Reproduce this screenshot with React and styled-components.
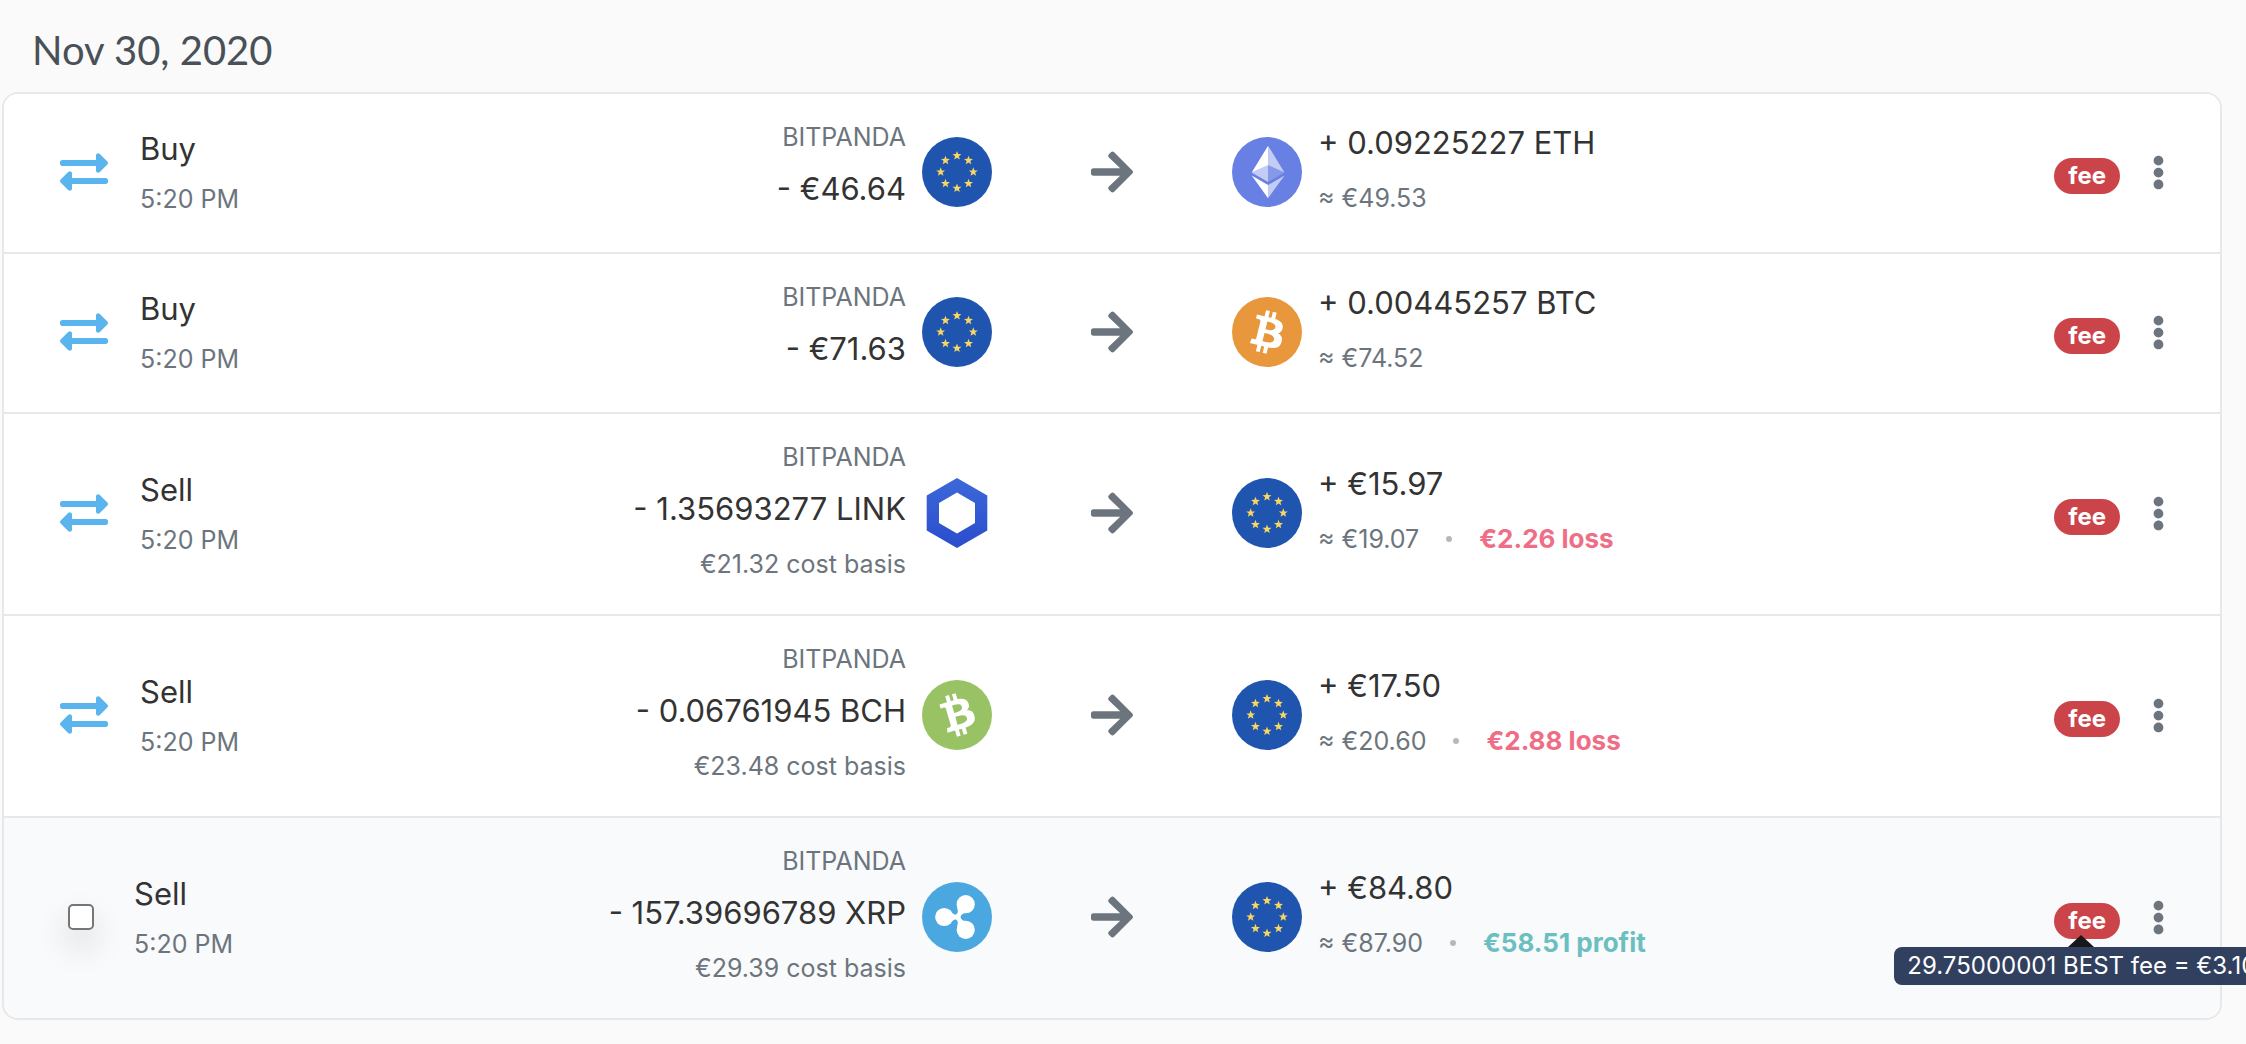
import * as React from 'react';
import styled, { createGlobalStyle } from 'styled-components';
import { FaArrowRight, FaEllipsisV, FaExchangeAlt } from 'react-icons/fa';

const GlobalStyle = createGlobalStyle`
  * {
    box-sizing: border-box;
  }

  body {
    margin: 0;
    overflow-x: hidden;
    background-color: #fafafa;
    color: #333;
    font-family: Inter, 'Liberation Sans', sans-serif;
  }
`;

const StyledMain = styled.main`
  padding: 24px 24px 24px 2px;
  overflow: hidden;
`;

const StyledDate = styled.h2`
  margin: 0 0 16px;
  padding-left: 30px;
  color: #495057;
  font-family: Lato, sans-serif;
  font-size: 40px;
  font-weight: 400;
  line-height: 52px;
`;

const StyledList = styled.ul`
  margin: 0;
  padding: 0;
  list-style: none;
  background-color: white;
  border: 2px solid #e8e8e9;
  border-radius: 16px;
`;

const StyledRow = styled.li`
  display: grid;
  grid-template-columns: 1fr 240px 1fr;
  align-items: center;
  padding: 0 56px;
  background-color: ${props => (props.$active ? '#f9fafc' : 'white')};
  border-bottom: 2px solid #e8e8e9;

  &:first-child {
    border-radius: 14px 14px 0 0;
  }

  &:last-child {
    border-bottom: 0;
    border-radius: 0 0 14px 14px;
  }
`;

const StyledSide = styled.div`
  display: flex;
  align-items: center;
`;

const StyledKind = styled.div`
  display: flex;
  align-items: center;
  gap: ${props => (props.$active ? '40px' : '32px')};
  padding-left: ${props => (props.$active ? '8px' : '0')};
  color: #5ab4ee;

  svg {
    margin-bottom: 2px;
  }
`;

const StyledKindText = styled.div`
  padding-top: 2px;
`;

const StyledCheckbox = styled.input`
  appearance: none;
  width: 26px;
  height: 26px;
  margin: 0 0 2px;
  background-color: white;
  border: 2px solid #767676;
  border-radius: 5px;
  box-shadow: 0 16px 32px rgba(0, 0, 0, 0.15);
`;

const StyledTitle = styled.div`
  color: #333;
  font-size: 31px;
  line-height: 50px;
`;

const StyledTime = styled.div`
  color: #6c757d;
  font-size: 25px;
  line-height: 50px;
`;

const StyledFrom = styled.div`
  flex: 1;
  padding: 23px 16px 31px 0;
  text-align: right;
`;

const StyledTo = styled.div`
  flex: 1;
  padding: 0 0 18px 16px;
`;

const StyledExchange = styled.div`
  color: #6c757d;
  font-size: 25px;
  line-height: 40px;
`;

const StyledAmount = styled.div`
  font-size: 31px;
  line-height: 64px;
`;

const StyledDetail = styled.div`
  display: flex;
  align-items: center;
  justify-content: ${props => (props.$end ? 'flex-end' : 'flex-start')};
  gap: 27px;
  margin-top: 4px;
  color: #6c757d;
  font-size: 25px;
  line-height: 38px;
`;

const StyledDot = styled.span`
  width: 6px;
  height: 6px;
  background-color: #b5b9be;
  border-radius: 50%;
`;

const StyledResult = styled.strong`
  color: ${props => (props.$profit ? '#6bbfc0' : '#ef6e85')};
  font-size: 26px;
  font-weight: 700;
`;

const StyledCoin = styled.svg`
  flex: none;
  width: 70px;
  height: 70px;
  margin-bottom: 2px;
`;

const StyledDirection = styled.div`
  display: flex;
  justify-content: center;
  padding-bottom: 2px;
  color: #6c757d;
`;

const StyledActions = styled.div`
  display: flex;
  align-items: center;
  gap: 32px;
  padding-bottom: 2px;
`;

const StyledFee = styled.span`
  position: relative;
  margin-top: 8px;
  padding: 0 14px;
  background-color: #cb444a;
  border-radius: 18px;
  color: white;
  font-size: 24px;
  font-weight: 700;
  line-height: 36px;
`;

const StyledTooltip = styled.span`
  position: absolute;
  top: 44px;
  left: -160px;
  padding: 0 13px;
  background-color: rgba(42, 56, 88, 0.96);
  border-radius: 8px;
  font-size: 24px;
  font-weight: 400;
  line-height: 38px;
  white-space: nowrap;

  &::before {
    content: '';
    position: absolute;
    top: -12px;
    left: 174px;
    border: 13px solid transparent;
    border-top: 0;
    border-bottom: 12px solid #161819;
  }
`;

const StyledMenuButton = styled.button`
  display: flex;
  justify-content: center;
  width: 12px;
  padding: 0;
  background: none;
  border: 0;
  color: #6c757d;

  svg {
    flex: none;
    width: 13px;
    height: 35px;
  }
`;

const STAR_ANGLES = [0, 45, 90, 135, 180, 225, 270, 315];

function starPoints(angle) {
  const cx = 35 + 16.3 * Math.sin((angle * Math.PI) / 180);
  const cy = 35 - 16.3 * Math.cos((angle * Math.PI) / 180);
  return Array.from({ length: 10 }, (_, i) => {
    const r = i % 2 ? 2 : 4.7;
    const a = (i * Math.PI) / 5;
    return `${cx + r * Math.sin(a)},${cy - r * Math.cos(a)}`;
  }).join(' ');
}

function EurCoin() {
  return (
    <StyledCoin viewBox="0 0 70 70" aria-hidden="true">
      <circle cx="35" cy="35" r="35" fill="#1f55ae" />
      {STAR_ANGLES.map(angle => (
        <polygon key={angle} points={starPoints(angle)} fill="#f8d661" />
      ))}
    </StyledCoin>
  );
}

function EthCoin() {
  return (
    <StyledCoin viewBox="0 0 32 32" aria-hidden="true">
      <circle cx="16" cy="16" r="16" fill="#687fe3" />
      <g fill="white">
        <path fillOpacity=".602" d="M16.498 4v8.87l7.497 3.35z" />
        <path d="M16.498 4L9 16.22l7.498-3.35z" />
        <path fillOpacity=".602" d="M16.498 21.968v6.027L24 17.616z" />
        <path d="M16.498 27.995v-6.028L9 17.616z" />
        <path fillOpacity=".2" d="M16.498 20.573l7.497-4.353-7.497-3.348z" />
        <path fillOpacity=".602" d="M9 16.22l7.498 4.353v-7.701z" />
      </g>
    </StyledCoin>
  );
}

function BtcCoin() {
  return (
    <StyledCoin viewBox="0 0 32 32" aria-hidden="true">
      <circle cx="16" cy="16" r="16" fill="#e8973d" />
      <path
        fill="white"
        d="M23.189 14.02c.314-2.096-1.283-3.223-3.465-3.975l.708-2.84-1.728-.43-.69 2.765c-.454-.114-.92-.22-1.385-.326l.695-2.783L15.596 6l-.708 2.839c-.376-.086-.746-.17-1.104-.26l.002-.009-2.384-.595-.46 1.846s1.283.294 1.256.312c.7.175.826.638.805 1.006l-.806 3.235c.048.012.11.03.18.057l-.183-.045-1.13 4.532c-.086.212-.303.531-.793.41.018.025-1.256-.313-1.256-.313l-.858 1.978 2.25.561c.418.105.828.215 1.231.318l-.715 2.872 1.727.43.708-2.84c.472.127.93.245 1.378.357l-.706 2.828 1.728.43.715-2.866c2.948.558 5.164.333 6.097-2.333.752-2.146-.037-3.385-1.588-4.192 1.13-.26 1.98-1.003 2.207-2.538zm-3.95 5.538c-.533 2.147-4.148.986-5.32.695l.95-3.805c1.172.293 4.929.872 4.37 3.11zm.535-5.569c-.487 1.953-3.495.96-4.47.717l.86-3.45c.975.243 4.118.696 3.61 2.733z"
      />
    </StyledCoin>
  );
}

function BchCoin() {
  return (
    <StyledCoin viewBox="0 0 32 32" aria-hidden="true">
      <circle cx="16" cy="16" r="16" fill="#98c263" />
      <path
        fill="white"
        d="M21.207 10.534c-.776-1.972-2.722-2.15-4.988-1.71l-.807-2.813-1.712.491.786 2.74c-.45.128-.908.27-1.363.41l-.79-2.758-1.711.49.805 2.813c-.368.114-.73.226-1.085.328l-.003-.01-2.362.677.525 1.83s1.258-.388 1.243-.358c.694-.199 1.035.139 1.2.468l.92 3.204c.047-.013.11-.029.184-.04l-.181.052 1.287 4.49c.032.227.004.612-.48.752.027.013-1.246.356-1.246.356l.247 2.143 2.228-.64c.415-.117.825-.227 1.226-.34l.817 2.845 1.71-.49-.807-2.815a65.74 65.74 0 001.372-.38l.802 2.803 1.713-.491-.814-2.84c2.831-.991 4.638-2.294 4.113-5.07-.422-2.234-1.724-2.912-3.471-2.836.848-.79 1.213-1.858.642-3.3zm-.65 6.77c.61 2.127-3.1 2.929-4.26 3.263l-1.081-3.77c1.16-.333 4.704-1.71 5.34.508zm-2.322-5.09c.554 1.935-2.547 2.58-3.514 2.857l-.98-3.419c.966-.277 3.915-1.455 4.494.563z"
      />
    </StyledCoin>
  );
}

function LinkCoin() {
  return (
    <StyledCoin viewBox="0 0 70 70" aria-hidden="true">
      <defs>
        <linearGradient id="link-fill" x1="0" y1="0" x2="0" y2="1">
          <stop offset="0" stopColor="#3d68d9" />
          <stop offset="1" stopColor="#2a4dcd" />
        </linearGradient>
      </defs>
      <path
        fill="url(#link-fill)"
        fillRule="evenodd"
        d="M35 0L65.3 17.5V52.5L35 70L4.7 52.5V17.5ZM35 14.5L17 25V45L35 55.5L53 45V25Z"
      />
    </StyledCoin>
  );
}

function XrpCoin() {
  return (
    <StyledCoin viewBox="0 0 70 70" aria-hidden="true">
      <circle cx="35" cy="35" r="35" fill="#4aa7df" />
      <g fill="white">
        <circle cx="22.2" cy="35" r="9.1" />
        <circle cx="43.7" cy="22.2" r="9.1" />
        <circle cx="43.7" cy="47.800" r="9.1" />
        <path d="M28 28Q31 33 34 32.5Q37 31 35 25L46 30.5Q39 31 38.5 35Q39 39 46 39.5L35 45Q37 39 34 37.5Q31 37 28 42Z" />
      </g>
    </StyledCoin>
  );
}

const COINS = {
  EUR: EurCoin,
  ETH: EthCoin,
  BTC: BtcCoin,
  BCH: BchCoin,
  LINK: LinkCoin,
  XRP: XrpCoin,
};

const TRANSACTIONS = [
  {
    id: 1,
    title: 'Buy',
    from: { coin: 'EUR', amount: '- €46.64' },
    to: { coin: 'ETH', amount: '+ 0.09225227 ETH', value: '≈ €49.53' },
  },
  {
    id: 2,
    title: 'Buy',
    from: { coin: 'EUR', amount: '- €71.63' },
    to: { coin: 'BTC', amount: '+ 0.00445257 BTC', value: '≈ €74.52' },
  },
  {
    id: 3,
    title: 'Sell',
    from: { coin: 'LINK', amount: '- 1.35693277 LINK', basis: '€21.32 cost basis' },
    to: { coin: 'EUR', amount: '+ €15.97', value: '≈ €19.07' },
    result: '€2.26 loss',
  },
  {
    id: 4,
    title: 'Sell',
    from: { coin: 'BCH', amount: '- 0.06761945 BCH', basis: '€23.48 cost basis' },
    to: { coin: 'EUR', amount: '+ €17.50', value: '≈ €20.60' },
    result: '€2.88 loss',
  },
  {
    id: 5,
    title: 'Sell',
    active: true,
    from: { coin: 'XRP', amount: '- 157.39696789 XRP', basis: '€29.39 cost basis' },
    to: { coin: 'EUR', amount: '+ €84.80', value: '≈ €87.90' },
    result: '€58.51 profit',
    profit: true,
    fee: '29.75000001 BEST fee = €3.10',
  },
];

function Transaction({ title, active, from, to, result, profit, fee }) {
  const FromCoin = COINS[from.coin];
  const ToCoin = COINS[to.coin];

  return (
    <StyledRow $active={active}>
      <StyledSide>
        <StyledKind $active={active}>
          {active ? (
            <StyledCheckbox type="checkbox" aria-label="Select transaction" />
          ) : (
            <FaExchangeAlt size={48} />
          )}
          <StyledKindText>
            <StyledTitle>{title}</StyledTitle>
            <StyledTime>5:20 PM</StyledTime>
          </StyledKindText>
        </StyledKind>
        <StyledFrom>
          <StyledExchange>BITPANDA</StyledExchange>
          <StyledAmount>{from.amount}</StyledAmount>
          {from.basis && <StyledDetail $end>{from.basis}</StyledDetail>}
        </StyledFrom>
        <FromCoin />
      </StyledSide>
      <StyledDirection>
        <FaArrowRight size={48} />
      </StyledDirection>
      <StyledSide>
        <ToCoin />
        <StyledTo>
          <StyledAmount>{to.amount}</StyledAmount>
          <StyledDetail>
            {to.value}
            {result && <StyledDot />}
            {result && <StyledResult $profit={profit}>{result}</StyledResult>}
          </StyledDetail>
        </StyledTo>
        <StyledActions>
          <StyledFee>
            fee
            {fee && <StyledTooltip role="tooltip">{fee}</StyledTooltip>}
          </StyledFee>
          <StyledMenuButton type="button" aria-label="Transaction menu">
            <FaEllipsisV />
          </StyledMenuButton>
        </StyledActions>
      </StyledSide>
    </StyledRow>
  );
}

export default function App() {
  return (
    <StyledMain>
      <GlobalStyle />
      <StyledDate>Nov 30, 2020</StyledDate>
      <StyledList>
        {TRANSACTIONS.map(transaction => (
          <Transaction key={transaction.id} {...transaction} />
        ))}
      </StyledList>
    </StyledMain>
  );
}
